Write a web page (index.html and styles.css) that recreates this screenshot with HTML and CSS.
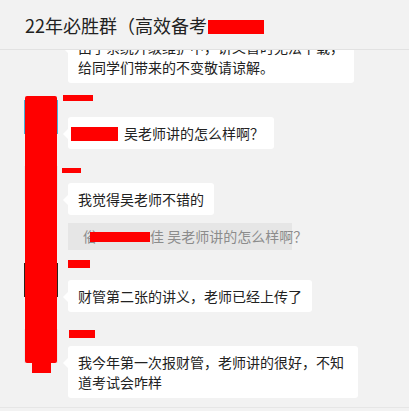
FILE: index.html
```html
<!DOCTYPE html>
<html lang="zh-CN">
<head>
    <meta charset="UTF-8">
    <meta name="viewport" content="width=device-width, initial-scale=1.0">
    <title>22年必胜群</title>
    <link rel="stylesheet" href="styles.css">
</head>
<body>
    <!-- Judul grup -->
    <div class="header">
        <span class="title">22年必胜群（高效备考</span><span class="mask mask-title"></span>
    </div>

    <div class="chat">
        <!-- Pesan terpotong di atas -->
        <div class="msg msg-first">
            <div class="avatar avatar-empty"></div>
            <div class="body">
                <div class="bubble">由于系统升级维护中，讲义暂时无法下载，<br>给同学们带来的不变敬请谅解。</div>
            </div>
        </div>

        <div class="msg">
            <div class="avatar avatar-blue"></div>
            <div class="body">
                <div class="name"><span class="mask mask-name1"></span></div>
                <div class="bubble"><span class="mask mask-inline"></span>吴老师讲的怎么样啊？</div>
            </div>
        </div>

        <div class="msg">
            <div class="avatar avatar-light"></div>
            <div class="body">
                <div class="name"><span class="mask mask-name2"></span></div>
                <div class="bubble">我觉得吴老师不错的</div>
                <div class="quote">俗<span class="mask mask-quote"></span>佳 吴老师讲的怎么样啊？</div>
            </div>
        </div>

        <div class="msg">
            <div class="avatar avatar-dark"></div>
            <div class="body">
                <div class="name"><span class="mask mask-name3"></span></div>
                <div class="bubble">财管第二张的讲义，老师已经上传了</div>
            </div>
        </div>

        <div class="msg">
            <div class="avatar avatar-light"></div>
            <div class="body">
                <div class="name"><span class="mask mask-name4"></span></div>
                <div class="bubble">我今年第一次报财管，老师讲的很好，不知道考试会咋样</div>
            </div>
        </div>

        <!-- Coretan merah di atas avatar -->
        <div class="mask-bar"></div>
        <div class="mask-bar-tip"></div>
    </div>
</body>
</html>
```

FILE: styles.css
```css
body {
    margin: 0;
    background-color: #f2f2f2;
    font-family: "Noto Sans CJK SC", "Noto Sans", sans-serif;
    color: #222;
}

.header {
    height: 49px;
    border-bottom: 1px solid #e2e2e2;
    padding-left: 25px;
    display: flex;
    align-items: center;
    font-size: 18px;
}

.title {
    line-height: 24px;
}

.mask {
    display: inline-block;
    background-color: #f00;
}

.mask-title {
    width: 56px;
    height: 14px;
    margin-left: 1px;
    margin-top: 5px;
}

.chat {
    position: relative;
    height: 357px;
    overflow: hidden;
    padding-left: 24px;
    border-bottom: 1px solid #e6e6e6;
}

.msg {
    display: flex;
    gap: 10px;
    margin-top: 12px;
}

.msg-first {
    margin-top: -19px;
}

.avatar {
    width: 34px;
    height: 34px;
    margin-top: 5px;
    flex: none;
}

.avatar-empty {
    visibility: hidden;
}

.avatar-blue {
    background-color: #4aaed6;
}

.avatar-light {
    background-color: #e8e8e8;
}

.avatar-dark {
    background-color: #2b211c;
}

.body {
    display: flex;
    flex-direction: column;
    align-items: flex-start;
}

.name {
    height: 16px;
    margin-bottom: 6px;
    display: flex;
    align-items: flex-start;
}

.mask-name1 {
    width: 30px;
    height: 6px;
    margin-left: -5px;
}

.mask-name2 {
    width: 19px;
    height: 5px;
    margin-left: -6px;
    margin-top: 7px;
}

.mask-name3 {
    width: 22px;
    height: 8px;
    margin-top: 2px;
}

.mask-name4 {
    width: 26px;
    height: 8px;
    margin-left: 1px;
    margin-top: 6px;
}

.bubble {
    position: relative;
    background-color: #fff;
    border-radius: 3px;
    padding: 6px 10px;
    max-width: 290px;
    box-sizing: border-box;
    font-size: 14px;
    line-height: 20px;
}

.bubble::before {
    content: "";
    position: absolute;
    left: -5px;
    top: 12px;
    border-top: 5px solid transparent;
    border-bottom: 5px solid transparent;
    border-right: 5px solid #fff;
}

.mask-inline {
    width: 47px;
    height: 14px;
    margin-left: -7px;
    margin-right: 6px;
    vertical-align: -2px;
}

.quote {
    margin-top: 8px;
    margin-bottom: -4px;
    width: 224px;
    box-sizing: border-box;
    padding: 3px 0 4px 15px;
    background-color: #e6e6e6;
    color: #8c8c8c;
    font-size: 14px;
    line-height: 20px;
    white-space: nowrap;
}

.mask-quote {
    width: 60px;
    height: 10px;
    margin-left: -7px;
}

.mask-bar {
    position: absolute;
    left: 25px;
    top: 46px;
    width: 32px;
    height: 267px;
    background-color: #f00;
    border-radius: 2px;
}

.mask-bar-tip {
    position: absolute;
    left: 32px;
    top: 310px;
    width: 19px;
    height: 13px;
    background-color: #f00;
}
```
